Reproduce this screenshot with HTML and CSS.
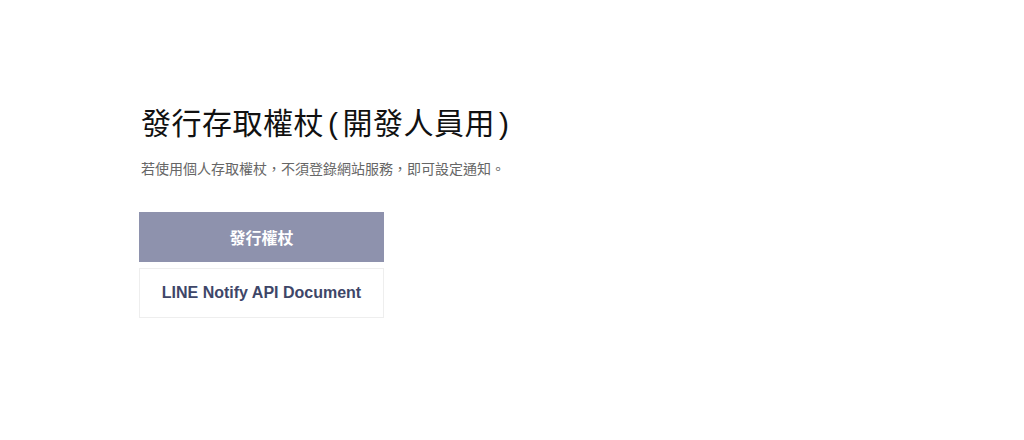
FILE: index.html
```html
<!DOCTYPE html>
<html lang="zh-Hant">
<head>
    <meta charset="UTF-8">
    <meta name="viewport" content="width=device-width, initial-scale=1.0">
    <title>發行存取權杖</title>
    <link rel="stylesheet" href="styles.css">
</head>
<body>

<div class="token-section">
    <h1 class="token-title">發行存取權杖<span class="paren">(</span>開發人員用<span class="paren">)</span></h1>
    <p class="token-desc">若使用個人存取權杖，不須登錄網站服務，即可設定通知。</p>
    <div class="token-buttons">
        <button class="btn btn-primary">發行權杖</button>
        <button class="btn btn-default">LINE Notify API Document</button>
    </div>
</div>

</body>
</html>
```

FILE: styles.css
```css
body {
    font-family: "Liberation Sans", Arial, "Noto Sans CJK SC", sans-serif;
    margin: 0;
    background-color: #fff;
}
.token-section {
    padding: 100px 0 0 141px;
}
.token-title {
    font-family: "Noto Sans CJK SC", sans-serif;
    font-size: 30px;
    font-weight: normal;
    color: #111;
    margin: 0;
    height: 42px;
    line-height: 42px;
    letter-spacing: 0.5px;
}
.token-title .paren {
    font-family: "Liberation Sans", sans-serif;
    line-height: 1;
    margin: 0 4px;
}
.token-desc {
    font-size: 14px;
    color: #666;
    margin: 17px 0 0;
    line-height: 20px;
}
.token-buttons {
    display: flex;
    flex-direction: column;
    gap: 6px;
    width: 245px;
    margin-top: 33px;
    margin-left: -2px;
}
.btn {
    height: 50px;
    border: 1px solid #eee;
    font-family: inherit;
    font-size: 16px;
    font-weight: bold;
    cursor: pointer;
    padding: 0;
}
.btn-primary {
    background-color: #8e92ad;
    border-color: #8e92ad;
    color: #fff;
}
.btn-default {
    background-color: #fff;
    color: #3e4668;
}
```
